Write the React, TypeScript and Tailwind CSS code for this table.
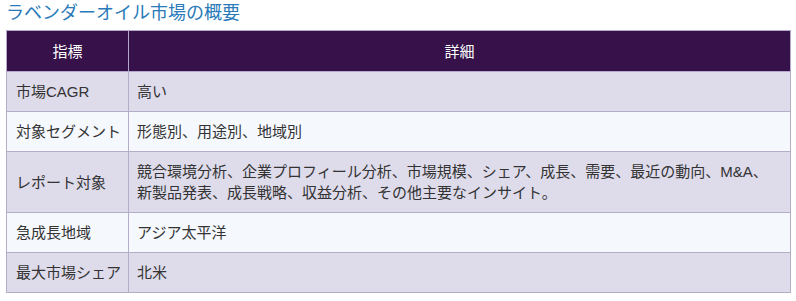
const rows: [string, string][] = [
  ["市場CAGR", "高い"],
  ["対象セグメント", "形態別、用途別、地域別"],
  [
    "レポート対象",
    "競合環境分析、企業プロフィール分析、市場規模、シェア、成長、需要、最近の動向、M&A、新製品発表、成長戦略、収益分析、その他主要なインサイト。",
  ],
  ["急成長地域", "アジア太平洋"],
  ["最大市場シェア", "北米"],
]

export default function App() {
  return (
    <div className="bg-white w-[796px] h-[301px] px-[6px] pt-[1px] font-['Liberation_Sans','Noto_Sans_CJK_JP',sans-serif]">
      <h2 className="text-[18px] leading-[24px] text-[#2a7ab9] mb-[5px]">ラベンダーオイル市場の概要</h2>
      <table className="w-[785px] table-fixed border-collapse text-[15px] leading-[21px] text-[#333]">
        <colgroup>
          <col className="w-[122px]" />
          <col />
        </colgroup>
        <thead>
          <tr className="bg-[#37114a] text-white">
            <th className="h-[41px] border border-[#b4a9cc] font-normal text-center">指標</th>
            <th className="h-[41px] border border-[#b4a9cc] font-normal text-center">詳細</th>
          </tr>
        </thead>
        <tbody>
          {rows.map(([k, v], i) => (
            <tr key={k} className={i % 2 === 0 ? "bg-[#dedbeb]" : "bg-[#f5f8fd]"}>
              <td className="border border-[#b3adc7] pl-[9px] pr-0 py-[9px] align-middle whitespace-nowrap">{k}</td>
              <td className="border border-[#b3adc7] px-[8px] py-[9px] align-middle">{v}</td>
            </tr>
          ))}
        </tbody>
      </table>
    </div>
  )
}
